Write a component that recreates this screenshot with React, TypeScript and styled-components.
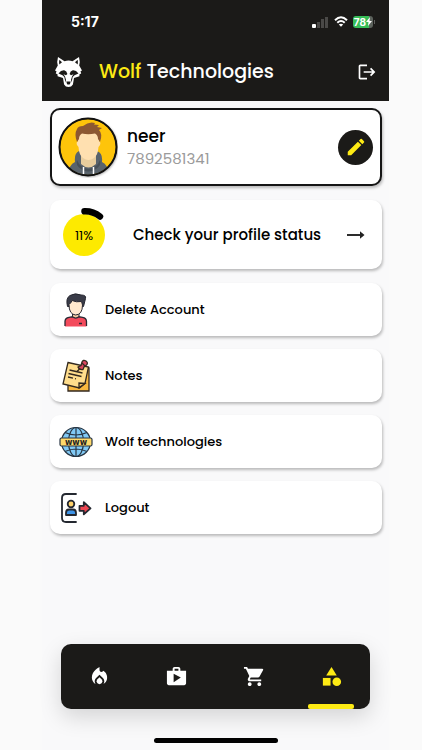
import React from "react";
import styled, { createGlobalStyle } from "styled-components";
import {
  MdCategory,
  MdEdit,
  MdLocalFireDepartment,
  MdLogout,
  MdShop,
  MdShoppingCart,
} from "react-icons/md";

const ink = "#1b1a18";
const yellow = "#fdea14";

const GlobalStyle = createGlobalStyle`
  * { box-sizing: border-box; }
  body {
    margin: 0;
    background: #fafafa;
    color: #000;
    font-family: Poppins, Inter, sans-serif;
  }
  button { font: inherit; color: inherit; border: 0; padding: 0; background: none; cursor: pointer; }
  a { color: inherit; text-decoration: none; }
  svg { display: block; flex: none; }
`;

const Page = styled.div`
  min-height: 100vh;
  padding: 0 33px 0 42px;
  display: flex;
`;

const Phone = styled.div`
  flex: 1;
  min-width: 0;
  display: flex;
  flex-direction: column;
  background: #f9f9fa;
`;

const Header = styled.header`
  background: ${ink};
  color: #fff;
`;

const StatusBar = styled.div`
  display: flex;
  align-items: center;
  justify-content: space-between;
  height: 43px;
  padding: 0 14px 0 29px;
`;

const Time = styled.span`
  font: 700 14px/20px Inter, sans-serif;
`;

const Signals = styled.div`
  display: flex;
  align-items: center;
  gap: 5px;
`;

const AppBar = styled.div`
  display: flex;
  align-items: center;
  height: 58px;
  padding: 0 12px;
`;

const Title = styled.h1`
  flex: 1;
  margin: 0 0 0 16px;
  font-size: 19px;
  line-height: 28px;
  font-weight: 500;
  white-space: nowrap;
`;

const Accent = styled.span`
  color: ${yellow};
`;

const Main = styled.main`
  flex: 1;
  display: flex;
  flex-direction: column;
  gap: 14px;
  padding: 7px 7px 0 8px;
`;

const Card = styled.section`
  display: flex;
  align-items: center;
  background: #fff;
  border-radius: 10px;
  box-shadow: 1px 2px 3px rgba(0, 0, 0, 0.26);
`;

const ProfileCard = styled(Card)`
  height: 78px;
  padding: 0 7px 0 6px;
  border: 2px solid #151515;
`;

const Person = styled.div`
  flex: 1;
  margin-left: 9px;
  padding-top: 2px;
`;

const Name = styled.div`
  font-size: 17px;
  line-height: 22px;
  font-weight: 500;
`;

const PhoneNumber = styled.div`
  font-size: 15px;
  line-height: 24px;
  color: #9b9b9b;
`;

const EditButton = styled.button`
  display: grid;
  place-items: center;
  width: 35px;
  height: 35px;
  border-radius: 50%;
  && { background: ${ink}; color: ${yellow}; }
`;

const StatusCard = styled(Card)`
  height: 69px;
  padding: 0 17px 0 12px;
`;

const StatusLink = styled.a`
  flex: 1;
  display: flex;
  align-items: center;
  justify-content: space-between;
  margin-left: 27px;
  font-size: 15px;
  line-height: 24px;
  font-weight: 500;
  white-space: nowrap;
`;

const Menu = styled.nav`
  display: flex;
  flex-direction: column;
  gap: 13px;
`;

const MenuItem = styled(Card).attrs({ as: "button", type: "button" })`
  && { background: #fff; }
  height: 53px;
  padding: 0 9px;
  gap: 12px;
  font-size: 13px;
  line-height: 20px;
  font-weight: 500;
  text-align: left;
`;

const TabBar = styled.nav`
  display: flex;
  justify-content: space-around;
  height: 65px;
  margin: 0 19px;
  background: ${ink};
  border-radius: 10px;
  box-shadow: 0 8px 22px rgba(0, 0, 0, 0.15);
`;

const Tab = styled.button<{ $active?: boolean }>`
  width: 46px;
  display: grid;
  grid-template-rows: 5px 1fr 5px;
  align-items: center;
  justify-items: center;
  && { color: ${(p) => (p.$active ? yellow : "#fff")}; }
  svg { grid-row: 2; }
  &::after {
    content: "";
    grid-row: 3;
    width: 100%;
    height: 5px;
    border-radius: 2px;
    background: ${(p) => (p.$active ? yellow : "transparent")};
  }
`;

const HomeIndicator = styled.div`
  width: 124px;
  height: 5px;
  margin: 29px auto 7px;
  background: #000;
  border-radius: 3px;
`;

const WolfLogo = () => (
  <svg width="29" height="32" viewBox="0 0 29 32" role="img" aria-label="Wolf">
    <path
      fill="#fff"
      d="M4 1 10.5 5.2Q14.5 4 18.5 5.2L25 1Q26.4 6 25.2 9.5L28 14.5 26.5 15.3 27.2 17.5 25.5 18.2 25.4 20.3 20 22 18.900 28.500Q17.500 31 14.5 31 11.500 31 10.100 28.500L9 22 3.6 20.3 3.5 18.2 1.8 17.5 2.5 15.3 1 14.5 3.8 9.5Q2.6 6 4 1Z"
    />
    <path fill={ink} d="M5.4 3.8 8 6.3 5.3 8.6Q4.8 6 5.4 3.8ZM23.6 3.8 21 6.3 23.7 8.6Q24.2 6 23.6 3.8Z" />
    <path
      fill={ink}
      d="M4.500 17.500Q7 14 10.200 14.300 12.800 15 13.400 18L12 19.200 9.500 18.300 11 20.500 12 23.800 11.500 26.500 10.300 21 8.500 19.200ZM24.500 17.500Q22 14 18.800 14.300 16.200 15 15.600 18L17 19.200 19.500 18.300 18 20.500 17 23.800 17.500 26.500 18.700 21 20.500 19.200Z"
    />
    <path fill={ink} d="M12.3 25.5h4.400l-.8 2.800q-1.400.6-2.800 0z" />
  </svg>
);

const Signal = () => (
  <svg width="17" height="12" viewBox="0 0 17 12" role="img" aria-label="Signal">
    <rect y="8" width="4" height="4" rx="1" fill="#fff" />
    <path fill="#4a4947" d="M5 6h3v6H5zM9 3h3v9H9zM13 1h3v11h-3z" />
  </svg>
);

const Wifi = () => (
  <svg width="14" height="11" viewBox="0 0 14 11" role="img" aria-label="Wi-Fi" fill="none" stroke="#fff" strokeWidth="2">
    <path d="M1 4.2Q7-1.6 13 4.2M3.3 6.8Q7 3.2 10.7 6.8" />
    <path fill="#fff" stroke="none" d="M4.8 8.5Q7 6.8 9.2 8.5L7 10.8Z" />
  </svg>
);

const Battery = styled.div`
  display: flex;
  align-items: center;
  height: 12px;
  padding: 0 1px;
  border-radius: 3px;
  background: linear-gradient(90deg, #37bd58 78%, #5c625c 78%);
  font: 700 10px/12px Inter, sans-serif;
`;

const BatteryGroup = styled.div`
  display: flex;
  align-items: center;
  gap: 1px;
  &::after {
    content: "";
    width: 1px;
    height: 4px;
    background: #5c5c5a;
  }
`;

const Avatar = () => (
  <svg width="60" height="62" viewBox="0 0 60 62" role="img" aria-label="neer">
    <defs>
      <clipPath id="face">
        <circle cx="30" cy="31" r="28" />
      </clipPath>
      <filter id="lift" x="-20%" y="-20%" width="140%" height="150%">
        <feDropShadow dx="1" dy="1" stdDeviation="1" floodOpacity=".35" />
      </filter>
    </defs>
    <circle cx="30" cy="31" r="29" fill="#111" filter="url(#lift)" />
    <g clipPath="url(#face)">
      <path fill="#fec40a" d="M0 0h60v64H0z" />
      <path fill="#59636c" d="M10 62Q10 49 17 46 16 37 21 35H39Q45 37 44 46 51 49 51 62Z" />
      <path fill="#464f57" d="M19 44Q22 52 30.500 53 39 52 42 44 44 49 38 53 30 58 23 53 17 49 19 44Z" />
      <path fill="#e8cd9d" d="M23 34h15v14q-7.500 7-15 0z" />
      <path fill="#ffe0b0" d="M20 15H41V25Q43 26 42 29L40.500 31Q40 39 36 42 30.500 46 25 42 21 39 20.500 31L19 29Q18 26 20 25Z" />
      <path fill="#8c5832" d="M19 26Q16 18 19 13 20 10 25 10 31 5 37 7L36 8.500 41 9 39 11 44 12 41 14Q45 18 42 26L40 23Q40 19 37 17.500 30 19 24 17.500 21 19 21 23Z" />
      <path fill="none" stroke="#fff" strokeWidth="1.500" d="M25.500 51v10M35.500 51v10" />
    </g>
    <circle cx="30" cy="31" r="28.500" fill="none" stroke="#111" strokeWidth="2" />
  </svg>
);

const ProgressText = styled.text`
  font: 400 13px Poppins, Inter, sans-serif;
  text-anchor: middle;
`;

const Progress = () => (
  <svg width="44" height="54" viewBox="0 0 44 54" role="img" aria-label="11%">
    <circle cx="22" cy="27" r="21" fill="#fdea00" />
    <path d="M22.500 3.300Q31 3 38 8.500" fill="none" stroke="#000" strokeWidth="6.500" strokeLinecap="round" />
    <ProgressText x="22" y="32">11%</ProgressText>
  </svg>
);

const ArrowIcon = () => (
  <svg width="18" height="10" viewBox="0 0 18 10" aria-hidden="true">
    <path d="M0 5h14" stroke="#222" strokeWidth="1.900" />
    <path d="M13 1.200 17.500 5 13 8.800z" fill="#222" />
  </svg>
);

const PersonIcon = () => (
  <svg width="34" height="36" viewBox="0 0 34 36" aria-hidden="true">
    <path fill="#f5cda4" stroke="#292934" d="M13.500 21h6.500v5q-3.200 2.500-6.500 0z" />
    <path fill="#f34b5c" d="M6 34.500v-5Q6 26 10 25.400l3.500-.6q3.200 2.500 6.500 0l3.500.6Q27.500 26 27.500 29.500v5z" />
    <path
      fill="none"
      stroke="#292934"
      strokeWidth="1.300"
      d="M6 34v-4.500Q6 26 10 25.400l3.500-.6q3.200 2.500 6.500 0l3.500.6Q27.500 26 27.500 29.500V34M20 31.500h3"
    />
    <path fill="#3a3c48" stroke="#25262f" d="M8.500 14.500Q6.500 6 11 3.500 16 .500 22 3 27.500 3 26.500 6.500L24.500 14.500Z" />
    <path fill="#ffe9cf" stroke="#292934" d="M10 12.500Q12.500 10.500 13 8.500 17 10.500 22.500 9.500L23.500 13Q23.500 22.500 16.700 23 10 22.500 10 12.500Z" />
  </svg>
);

const NotesIcon = () => (
  <svg width="34" height="36" viewBox="0 0 34 36" aria-hidden="true" stroke="#33291f" strokeWidth="1.300">
    <path fill="#f9b83f" d="M9 10h21v23H9z" />
    <path fill="#ffdd8c" d="M9 4.500 29.500 9 26 25.500 20.500 30 4 26Z" />
    <path fill="#efbd60" d="M26 25.500 20 25v4.800z" />
    <path fill="none" d="m10.500 12 13 3M9.500 15.500l13 3M9 19l5 1.200m2 .4 1 .2" />
    <path fill="#dc4660" d="m19 9 3-1.500 1-3.500q1-2.500 4-1 2.500 2 .5 4l-2.500 2-1 2.500Q20 12 19 9Z" />
    <path fill="none" d="m21 10.500-3 3M23 5l3 3" />
  </svg>
);

const GlobeText = styled.text`
  font: 700 8px "DejaVu Sans", sans-serif;
  text-anchor: middle;
  fill: #222;
  stroke: none;
`;

const GlobeIcon = () => (
  <svg width="34" height="36" viewBox="0 0 34 36" aria-hidden="true" stroke="#283644" strokeWidth="1.200">
    <circle cx="17" cy="18" r="14.500" fill="#80c9f5" />
    <g fill="none">
      <ellipse cx="17" cy="18" rx="7.500" ry="14.500" />
      <path d="M17 3.500v29M6 8.500q11 5 22 0M6 27.500q11-5 22 0" />
    </g>
    <rect x="1" y="14" width="32" height="8" rx="1.500" fill="#ffd96b" />
    <GlobeText x="17" y="20.500">www</GlobeText>
  </svg>
);

const LogoutIcon = () => (
  <svg width="34" height="36" viewBox="0 0 34 36" aria-hidden="true" stroke="#242830" strokeWidth="1.800">
    <path fill="none" strokeLinecap="round" d="M17 4H7Q3 4 3 8v20q0 4 4 4h10" />
    <circle cx="12" cy="14" r="3.300" fill="#ffd26b" />
    <path fill="#3e95e9" strokeLinejoin="round" d="M7 25v-2q0-3.500 3-3.500h4q3 0 3 3.500v2z" />
    <path fill="#ee4652" strokeLinejoin="round" d="M20.500 15.800h4.300v-3.600l6.700 6.100-6.700 6.100v-3.600h-4.300z" />
  </svg>
);

const menu = [
  { label: "Delete Account", Icon: PersonIcon },
  { label: "Notes", Icon: NotesIcon },
  { label: "Wolf technologies", Icon: GlobeIcon },
  { label: "Logout", Icon: LogoutIcon },
];

const tabs = [
  { label: "Trending", Icon: MdLocalFireDepartment },
  { label: "Courses", Icon: MdShop },
  { label: "Cart", Icon: MdShoppingCart },
  { label: "More", Icon: MdCategory, active: true },
];

export default function App() {
  return (
    <Page>
      <GlobalStyle />
      <Phone>
        <Header>
          <StatusBar>
            <Time>5:17</Time>
            <Signals>
              <Signal />
              <Wifi />
              <BatteryGroup>
                <Battery>
                  78
                  <svg width="6" height="9" viewBox="0 0 6 9" aria-hidden="true">
                    <path fill="#fff" d="M4 0 0 5h2.500L2 9l4-5H3.500z" />
                  </svg>
                </Battery>
              </BatteryGroup>
            </Signals>
          </StatusBar>
          <AppBar>
            <WolfLogo />
            <Title>
              <Accent>Wolf</Accent> Technologies
            </Title>
            <button aria-label="Log out">
              <MdLogout size={20} />
            </button>
          </AppBar>
        </Header>
        <Main>
          <ProfileCard>
            <Avatar />
            <Person>
              <Name>neer</Name>
              <PhoneNumber>7892581341</PhoneNumber>
            </Person>
            <EditButton aria-label="Edit profile">
              <MdEdit size={22} />
            </EditButton>
          </ProfileCard>
          <StatusCard>
            <Progress />
            <StatusLink href="#profile">
              Check your profile status
              <ArrowIcon />
            </StatusLink>
          </StatusCard>
          <Menu>
            {menu.map(({ label, Icon }) => (
              <MenuItem key={label}>
                <Icon />
                {label}
              </MenuItem>
            ))}
          </Menu>
        </Main>
        <TabBar>
          {tabs.map(({ label, Icon, active }) => (
            <Tab key={label} aria-label={label} $active={active}>
              <Icon size={23} />
            </Tab>
          ))}
        </TabBar>
        <HomeIndicator />
      </Phone>
    </Page>
  );
}
